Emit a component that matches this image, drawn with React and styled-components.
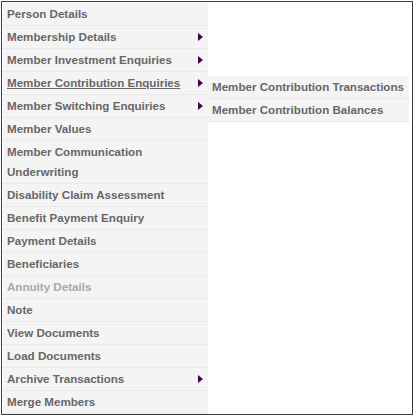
import React from 'react';
import styled, { createGlobalStyle } from 'styled-components';

const GlobalStyle = createGlobalStyle`
  html, body {
    margin: 0;
    padding: 0;
    background: #fff;
  }
  body {
    font-family: "Liberation Sans", Arial, sans-serif;
  }
`;

const Frame = styled.div`
  box-sizing: border-box;
  width: 412px;
  height: 414px;
  margin: 1px 0 0 1px;
  padding: 1px;
  border: 1px solid #3c3c3c;
  background: #fff;
`;

const Menu = styled.ul`
  list-style: none;
  margin: 0;
  padding: 0;
  width: 205px;
  background: #f5f4f4;
`;

const Item = styled.li`
  position: relative;
  display: flex;
  align-items: center;
  justify-content: space-between;
  box-sizing: border-box;
  padding: 1px 4px 1px 4px;
  line-height: 20px;
  border-bottom: 1px dotted #dedede;
  font-size: 11.6px;
  font-weight: bold;
  color: ${p => (p.$disabled ? '#a9a9a9' : '#676767')};
`;

const Label = styled.span`
  max-width: ${p => (p.$wide ? 'none' : '185px')};
  white-space: ${p => (p.$wide ? 'nowrap' : 'normal')};
  text-decoration: ${p => (p.$hover ? 'underline' : 'none')};
`;

const Arrow = styled.span`
  width: 0;
  height: 0;
  margin-right: 1px;
  border-top: 4.5px solid transparent;
  border-bottom: 4.5px solid transparent;
  border-left: 5px solid #3a0b3d;
`;

const Flyout = styled.ul`
  position: absolute;
  left: 205px;
  top: 4px;
  list-style: none;
  margin: 0;
  padding: 0;
  width: 201px;
  background: #f5f4f4;
`;

const items = [
  { label: 'Person Details' },
  { label: 'Membership Details', sub: true },
  { label: 'Member Investment Enquiries', sub: true },
  {
    label: 'Member Contribution Enquiries',
    sub: true,
    hover: true,
    children: ['Member Contribution Transactions', 'Member Contribution Balances'],
  },
  { label: 'Member Switching Enquiries', sub: true },
  { label: 'Member Values' },
  { label: 'Member Communication Underwriting' },
  { label: 'Disability Claim Assessment' },
  { label: 'Benefit Payment Enquiry' },
  { label: 'Payment Details' },
  { label: 'Beneficiaries' },
  { label: 'Annuity Details', disabled: true },
  { label: 'Note' },
  { label: 'View Documents' },
  { label: 'Load Documents' },
  { label: 'Archive Transactions', sub: true },
  { label: 'Merge Members' },
];

export default function App() {
  return (
    <>
      <GlobalStyle />
      <Frame>
        <Menu>
          {items.map(it => (
            <Item key={it.label} $disabled={it.disabled}>
              <Label $hover={it.hover}>{it.label}</Label>
              {it.sub && <Arrow />}
              {it.children && (
                <Flyout>
                  {it.children.map(c => (
                    <Item key={c}>
                      <Label $wide>{c}</Label>
                    </Item>
                  ))}
                </Flyout>
              )}
            </Item>
          ))}
        </Menu>
      </Frame>
    </>
  );
}
